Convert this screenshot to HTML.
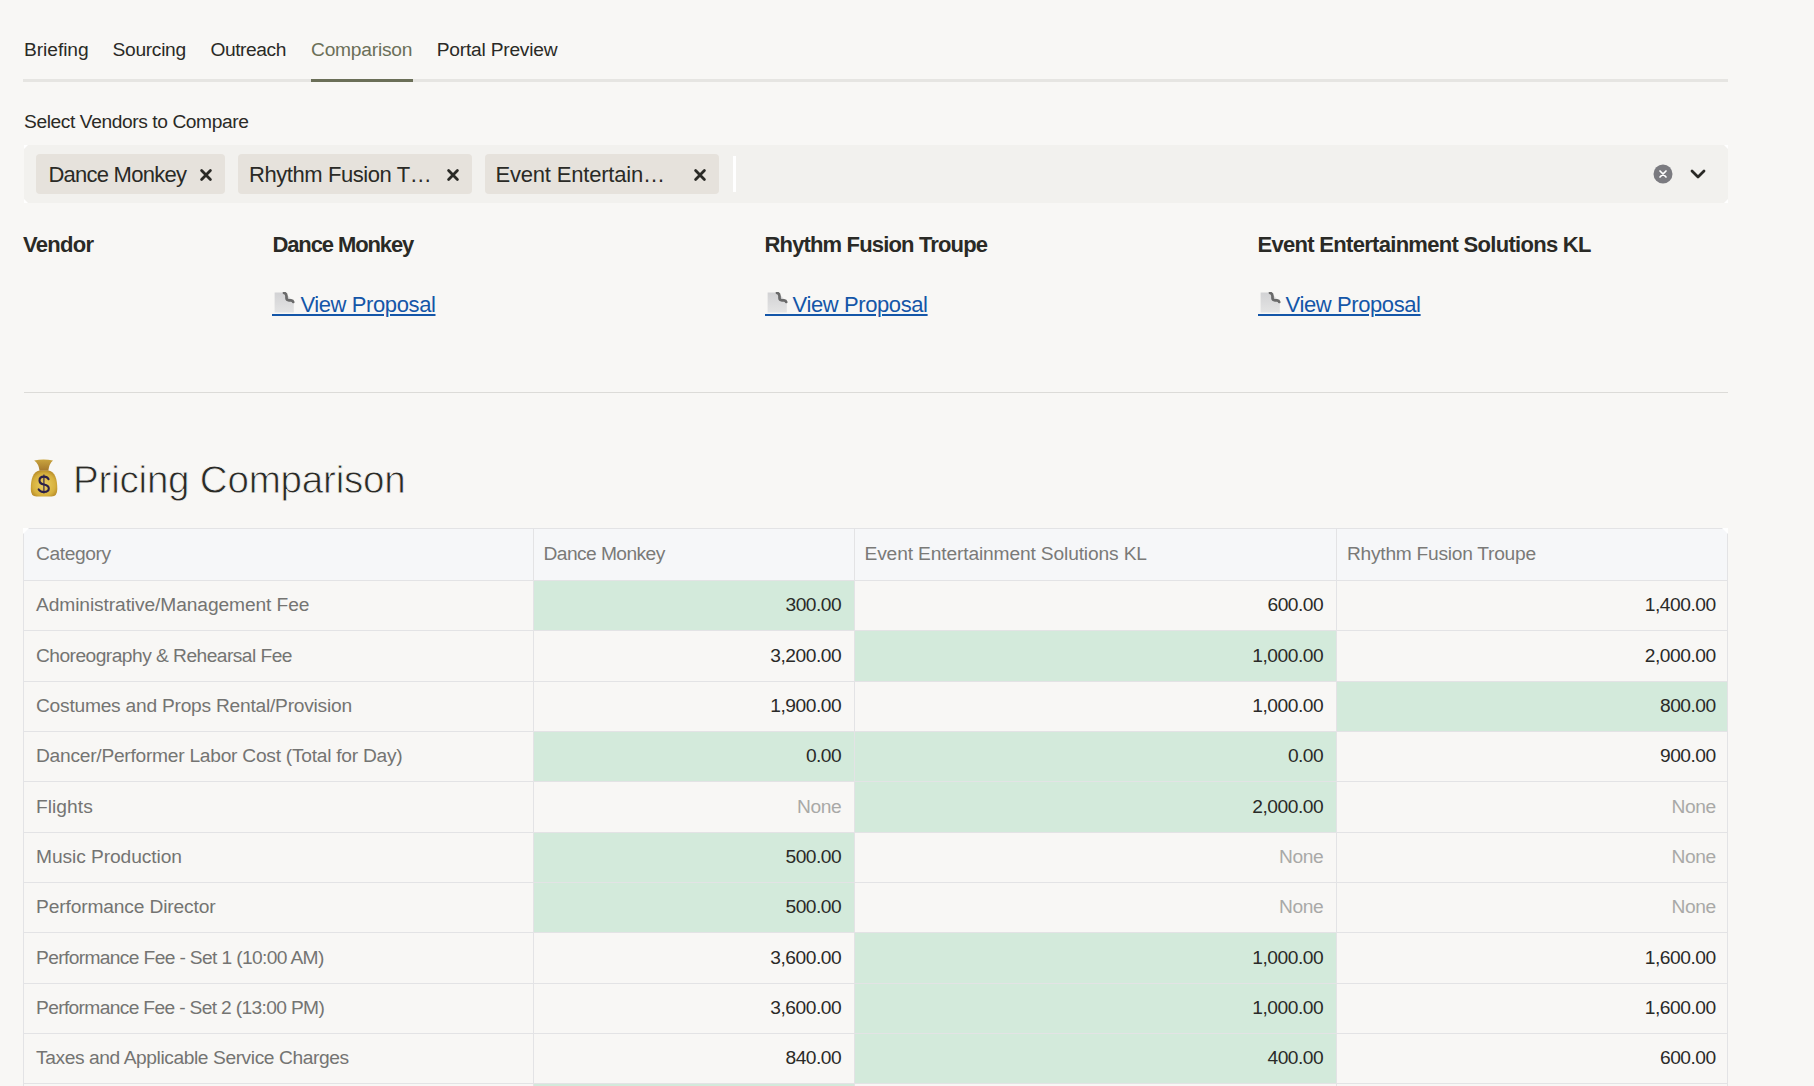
<!DOCTYPE html>
<html><head><meta charset="utf-8"><style>
html,body{margin:0;padding:0;background:#f8f7f5;width:1814px;height:1086px;overflow:hidden;}
body{position:relative;font-family:"Liberation Sans",sans-serif;}
.t{position:absolute;white-space:nowrap;line-height:1;}
.r{position:absolute;}
</style></head><body>
<div class="t" style="left:24.00px;top:40.15px;font-size:19.2px;color:#2a2a26;letter-spacing:-0.057px;">Briefing</div>
<div class="t" style="left:112.50px;top:40.15px;font-size:19.2px;color:#2a2a26;letter-spacing:-0.297px;">Sourcing</div>
<div class="t" style="left:210.40px;top:40.15px;font-size:19.2px;color:#2a2a26;letter-spacing:-0.411px;">Outreach</div>
<div class="t" style="left:311.00px;top:40.15px;font-size:19.2px;color:#6b6f58;letter-spacing:-0.223px;">Comparison</div>
<div class="t" style="left:436.70px;top:40.15px;font-size:19.2px;color:#2a2a26;letter-spacing:-0.214px;">Portal Preview</div>
<div class="r" style="left:23px;top:79px;width:1705px;height:3px;background:#e6e5e2"></div>
<div class="r" style="left:311px;top:79px;width:102px;height:3px;background:#6b6f58"></div>
<div class="t" style="left:24.00px;top:112.15px;font-size:19.2px;color:#2a2a26;letter-spacing:-0.408px;">Select Vendors to Compare</div>
<div class="r" style="left:24px;top:145px;width:1704px;height:58px;background:#f2f1ee"></div>
<svg class="r" style="left:24px;top:145px" width="4" height="4"><polygon points="0,0 4,0 0,4" fill="#ffffff"/></svg>
<svg class="r" style="left:1724px;top:145px" width="4" height="4"><polygon points="4,0 0,0 4,4" fill="#ffffff"/></svg>
<svg class="r" style="left:24px;top:199px" width="4" height="4"><polygon points="0,4 4,4 0,0" fill="#ffffff"/></svg>
<svg class="r" style="left:1724px;top:199px" width="4" height="4"><polygon points="4,4 0,4 4,0" fill="#ffffff"/></svg>
<div class="r" style="left:35.8px;top:154px;width:189.2px;height:40px;background:#e6e2dc;border-radius:4px"></div>
<div class="t" style="left:48.40px;top:163.68px;font-size:22px;color:#2a2a26;letter-spacing:-0.749px;">Dance Monkey</div>
<svg class="r" style="left:199.4px;top:167.75px" width="14" height="14" viewBox="0 0 14 14"><path d="M2.6 2.6L11.4 11.4M11.4 2.6L2.6 11.4" stroke="#2a2a26" stroke-width="2.8" stroke-linecap="round"/></svg>
<div class="r" style="left:237.5px;top:154px;width:234.3px;height:40px;background:#e6e2dc;border-radius:4px"></div>
<div class="t" style="left:249.00px;top:163.68px;font-size:22px;color:#2a2a26;letter-spacing:-0.427px;">Rhythm Fusion T…</div>
<svg class="r" style="left:446.2px;top:167.75px" width="14" height="14" viewBox="0 0 14 14"><path d="M2.6 2.6L11.4 11.4M11.4 2.6L2.6 11.4" stroke="#2a2a26" stroke-width="2.8" stroke-linecap="round"/></svg>
<div class="r" style="left:484.5px;top:154px;width:234.0px;height:40px;background:#e6e2dc;border-radius:4px"></div>
<div class="t" style="left:495.50px;top:163.68px;font-size:22px;color:#2a2a26;letter-spacing:-0.194px;">Event Entertain…</div>
<svg class="r" style="left:692.9px;top:167.75px" width="14" height="14" viewBox="0 0 14 14"><path d="M2.6 2.6L11.4 11.4M11.4 2.6L2.6 11.4" stroke="#2a2a26" stroke-width="2.8" stroke-linecap="round"/></svg>
<div class="r" style="left:733px;top:156px;width:3px;height:36px;background:#ffffff"></div>
<svg class="r" style="left:1653px;top:164px" width="20" height="20" viewBox="0 0 20 20"><circle cx="10" cy="10" r="9.5" fill="#7b7b80"/><path d="M7 7L13 13M13 7L7 13" stroke="#fff" stroke-width="1.7" stroke-linecap="round"/></svg>
<svg class="r" style="left:1690px;top:168px" width="16" height="12" viewBox="0 0 16 12"><path d="M2 3L8 9L14 3" stroke="#2a2a26" stroke-width="2.8" fill="none" stroke-linecap="round" stroke-linejoin="round"/></svg>
<div class="t" style="left:23.00px;top:233.98px;font-size:22px;color:#2a2a26;font-weight:bold;letter-spacing:-0.714px;">Vendor</div>
<div class="t" style="left:272.40px;top:233.98px;font-size:22px;color:#2a2a26;font-weight:bold;letter-spacing:-1.105px;">Dance Monkey</div>
<svg class="r" style="left:274.4px;top:291.5px" width="22" height="22" viewBox="0 0 22 22"><defs><linearGradient id="pg" x1="0" y1="0" x2="0" y2="1"><stop offset="0" stop-color="#d2d2d4"/><stop offset="1" stop-color="#e4e4e4"/></linearGradient></defs><path d="M0.6 0.5H10.5L19.8 9.8V20.5H0.6Z" fill="url(#pg)"/><path d="M10 0.9Q12.4 1.3 12.5 4.2V6.2Q12.7 8.2 15 8.3H17Q18.9 8.5 19.2 10" stroke="#6a6a6a" stroke-width="2.7" fill="none" stroke-linecap="round"/></svg>
<div class="t" style="left:300.40px;top:294.18px;font-size:22px;color:#1456a8;letter-spacing:-0.394px;text-decoration:underline;text-decoration-thickness:1.6px;text-underline-offset:2.2px;">View Proposal</div>
<div class="r" style="left:272.4px;top:314.2px;width:29px;height:1.6px;background:#1456a8"></div>
<div class="t" style="left:764.50px;top:233.98px;font-size:22px;color:#2a2a26;font-weight:bold;letter-spacing:-0.845px;">Rhythm Fusion Troupe</div>
<svg class="r" style="left:766.5px;top:291.5px" width="22" height="22" viewBox="0 0 22 22"><defs><linearGradient id="pg" x1="0" y1="0" x2="0" y2="1"><stop offset="0" stop-color="#d2d2d4"/><stop offset="1" stop-color="#e4e4e4"/></linearGradient></defs><path d="M0.6 0.5H10.5L19.8 9.8V20.5H0.6Z" fill="url(#pg)"/><path d="M10 0.9Q12.4 1.3 12.5 4.2V6.2Q12.7 8.2 15 8.3H17Q18.9 8.5 19.2 10" stroke="#6a6a6a" stroke-width="2.7" fill="none" stroke-linecap="round"/></svg>
<div class="t" style="left:792.50px;top:294.18px;font-size:22px;color:#1456a8;letter-spacing:-0.394px;text-decoration:underline;text-decoration-thickness:1.6px;text-underline-offset:2.2px;">View Proposal</div>
<div class="r" style="left:764.5px;top:314.2px;width:29px;height:1.6px;background:#1456a8"></div>
<div class="t" style="left:1257.50px;top:233.98px;font-size:22px;color:#2a2a26;font-weight:bold;letter-spacing:-0.700px;">Event Entertainment Solutions KL</div>
<svg class="r" style="left:1259.5px;top:291.5px" width="22" height="22" viewBox="0 0 22 22"><defs><linearGradient id="pg" x1="0" y1="0" x2="0" y2="1"><stop offset="0" stop-color="#d2d2d4"/><stop offset="1" stop-color="#e4e4e4"/></linearGradient></defs><path d="M0.6 0.5H10.5L19.8 9.8V20.5H0.6Z" fill="url(#pg)"/><path d="M10 0.9Q12.4 1.3 12.5 4.2V6.2Q12.7 8.2 15 8.3H17Q18.9 8.5 19.2 10" stroke="#6a6a6a" stroke-width="2.7" fill="none" stroke-linecap="round"/></svg>
<div class="t" style="left:1285.50px;top:294.18px;font-size:22px;color:#1456a8;letter-spacing:-0.394px;text-decoration:underline;text-decoration-thickness:1.6px;text-underline-offset:2.2px;">View Proposal</div>
<div class="r" style="left:1257.5px;top:314.2px;width:29px;height:1.6px;background:#1456a8"></div>
<div class="r" style="left:24px;top:392px;width:1704px;height:1px;background:#dcdbd8"></div>
<svg class="r" style="left:26px;top:455px" width="38" height="45" viewBox="0 0 38 45"><defs><radialGradient id="bg" cx="0.5" cy="0.55" r="0.6"><stop offset="0" stop-color="#ecd062"/><stop offset="0.7" stop-color="#d7b13e"/><stop offset="1" stop-color="#b48726"/></radialGradient><linearGradient id="nk" x1="0" y1="0" x2="0" y2="1"><stop offset="0" stop-color="#c9a43e"/><stop offset="1" stop-color="#a5782c"/></linearGradient></defs><path d="M8.2 5.6Q17.6 3.6 27 5.6Q23.2 8.6 22.3 15.8H13.6Q12.6 8.6 8.2 5.6Z" fill="url(#nk)"/><path d="M13.4 15.6C7 17 4.8 24 4.8 34Q4.8 41.6 10.5 41.6H25.5Q31.3 41.6 31.3 34C31.3 24 29 17 22.6 15.6Z" fill="url(#bg)"/><path d="M17.9 19.6V38.6" stroke="#3a2a50" stroke-width="1.2"/><path d="M22.6 24.2Q21.2 21.6 18 21.6Q13.4 21.6 13.5 25.6Q13.6 28.6 18 29.6Q22.8 30.6 22.8 33.6Q22.8 37 18 37Q14.2 37 12.7 34.4" stroke="#2b2048" stroke-width="2.1" fill="none" stroke-linecap="round"/></svg>
<div class="t" style="left:73.00px;top:460.93px;font-size:38.6px;color:#2a2a26;letter-spacing:-0.224px;-webkit-text-stroke:0.8px #f8f7f5;">Pricing Comparison</div>
<div class="r" style="left:23px;top:528px;width:1705px;height:560px;border:1px solid #e3e3e5;box-sizing:border-box;background:#f8f7f5"></div>
<div class="r" style="left:24px;top:529px;width:1703px;height:51px;background:#f6f7f9"></div>
<div class="t" style="left:36.00px;top:544.25px;font-size:19.2px;color:#7a7a78;letter-spacing:-0.401px;">Category</div>
<div class="t" style="left:543.50px;top:544.25px;font-size:19.2px;color:#7a7a78;letter-spacing:-0.560px;">Dance Monkey</div>
<div class="t" style="left:864.50px;top:544.25px;font-size:19.2px;color:#7a7a78;letter-spacing:-0.142px;">Event Entertainment Solutions KL</div>
<div class="t" style="left:1347.00px;top:544.25px;font-size:19.2px;color:#7a7a78;letter-spacing:-0.264px;">Rhythm Fusion Troupe</div>
<div class="r" style="left:533px;top:580.00px;width:321px;height:50.33px;background:#d3eadb"></div>
<div class="r" style="left:854px;top:630.33px;width:482px;height:50.33px;background:#d3eadb"></div>
<div class="r" style="left:1336px;top:680.67px;width:391px;height:50.33px;background:#d3eadb"></div>
<div class="r" style="left:533px;top:731.00px;width:321px;height:50.33px;background:#d3eadb"></div>
<div class="r" style="left:854px;top:731.00px;width:482px;height:50.33px;background:#d3eadb"></div>
<div class="r" style="left:854px;top:781.33px;width:482px;height:50.33px;background:#d3eadb"></div>
<div class="r" style="left:533px;top:831.66px;width:321px;height:50.33px;background:#d3eadb"></div>
<div class="r" style="left:533px;top:882.00px;width:321px;height:50.33px;background:#d3eadb"></div>
<div class="r" style="left:854px;top:932.33px;width:482px;height:50.33px;background:#d3eadb"></div>
<div class="r" style="left:854px;top:982.66px;width:482px;height:50.33px;background:#d3eadb"></div>
<div class="r" style="left:854px;top:1033.00px;width:482px;height:50.33px;background:#d3eadb"></div>
<div class="r" style="left:533px;top:1083.33px;width:321px;height:50.33px;background:#d3eadb"></div>
<div class="r" style="left:23px;top:580.00px;width:1705px;height:1px;background:#e3e3e5"></div>
<div class="r" style="left:23px;top:630.33px;width:1705px;height:1px;background:#e3e3e5"></div>
<div class="r" style="left:23px;top:680.67px;width:1705px;height:1px;background:#e3e3e5"></div>
<div class="r" style="left:23px;top:731.00px;width:1705px;height:1px;background:#e3e3e5"></div>
<div class="r" style="left:23px;top:781.33px;width:1705px;height:1px;background:#e3e3e5"></div>
<div class="r" style="left:23px;top:831.66px;width:1705px;height:1px;background:#e3e3e5"></div>
<div class="r" style="left:23px;top:882.00px;width:1705px;height:1px;background:#e3e3e5"></div>
<div class="r" style="left:23px;top:932.33px;width:1705px;height:1px;background:#e3e3e5"></div>
<div class="r" style="left:23px;top:982.66px;width:1705px;height:1px;background:#e3e3e5"></div>
<div class="r" style="left:23px;top:1033.00px;width:1705px;height:1px;background:#e3e3e5"></div>
<div class="r" style="left:23px;top:1083.33px;width:1705px;height:1px;background:#e3e3e5"></div>
<div class="r" style="left:533px;top:528px;width:1px;height:560px;background:#e3e3e5"></div>
<div class="r" style="left:854px;top:528px;width:1px;height:560px;background:#e3e3e5"></div>
<div class="r" style="left:1336px;top:528px;width:1px;height:560px;background:#e3e3e5"></div>
<svg class="r" style="left:23px;top:528px" width="6" height="6"><polygon points="0,0 6,0 0,6" fill="#ffffff"/></svg>
<svg class="r" style="left:1722px;top:528px" width="6" height="6"><polygon points="6,0 0,0 6,6" fill="#ffffff"/></svg>
<div class="t" style="left:36.00px;top:595.41px;font-size:19.2px;color:#747472;letter-spacing:-0.100px;">Administrative/Management Fee</div>
<div class="t" style="left:785.57px;top:595.41px;font-size:19.2px;color:#2a2a28;letter-spacing:-0.520px;">300.00</div>
<div class="t" style="left:1267.57px;top:595.41px;font-size:19.2px;color:#2a2a28;letter-spacing:-0.520px;">600.00</div>
<div class="t" style="left:1644.77px;top:595.41px;font-size:19.2px;color:#2a2a28;letter-spacing:-0.472px;">1,400.00</div>
<div class="t" style="left:36.00px;top:645.75px;font-size:19.2px;color:#747472;letter-spacing:-0.533px;">Choreography &amp; Rehearsal Fee</div>
<div class="t" style="left:770.27px;top:645.75px;font-size:19.2px;color:#2a2a28;letter-spacing:-0.472px;">3,200.00</div>
<div class="t" style="left:1252.27px;top:645.75px;font-size:19.2px;color:#2a2a28;letter-spacing:-0.472px;">1,000.00</div>
<div class="t" style="left:1644.77px;top:645.75px;font-size:19.2px;color:#2a2a28;letter-spacing:-0.472px;">2,000.00</div>
<div class="t" style="left:36.00px;top:696.08px;font-size:19.2px;color:#747472;letter-spacing:-0.239px;">Costumes and Props Rental/Provision</div>
<div class="t" style="left:770.27px;top:696.08px;font-size:19.2px;color:#2a2a28;letter-spacing:-0.472px;">1,900.00</div>
<div class="t" style="left:1252.27px;top:696.08px;font-size:19.2px;color:#2a2a28;letter-spacing:-0.472px;">1,000.00</div>
<div class="t" style="left:1660.07px;top:696.08px;font-size:19.2px;color:#2a2a28;letter-spacing:-0.520px;">800.00</div>
<div class="t" style="left:36.00px;top:746.41px;font-size:19.2px;color:#747472;letter-spacing:-0.258px;">Dancer/Performer Labor Cost (Total for Day)</div>
<div class="t" style="left:805.98px;top:746.41px;font-size:19.2px;color:#2a2a28;letter-spacing:-0.551px;">0.00</div>
<div class="t" style="left:1287.98px;top:746.41px;font-size:19.2px;color:#2a2a28;letter-spacing:-0.551px;">0.00</div>
<div class="t" style="left:1660.07px;top:746.41px;font-size:19.2px;color:#2a2a28;letter-spacing:-0.520px;">900.00</div>
<div class="t" style="left:36.00px;top:796.75px;font-size:19.2px;color:#747472;letter-spacing:0.042px;">Flights</div>
<div class="t" style="left:797.05px;top:796.75px;font-size:19.2px;color:#a9a9a7;letter-spacing:-0.415px;">None</div>
<div class="t" style="left:1252.27px;top:796.75px;font-size:19.2px;color:#2a2a28;letter-spacing:-0.472px;">2,000.00</div>
<div class="t" style="left:1671.55px;top:796.75px;font-size:19.2px;color:#a9a9a7;letter-spacing:-0.415px;">None</div>
<div class="t" style="left:36.00px;top:847.08px;font-size:19.2px;color:#747472;letter-spacing:-0.084px;">Music Production</div>
<div class="t" style="left:785.57px;top:847.08px;font-size:19.2px;color:#2a2a28;letter-spacing:-0.520px;">500.00</div>
<div class="t" style="left:1279.05px;top:847.08px;font-size:19.2px;color:#a9a9a7;letter-spacing:-0.415px;">None</div>
<div class="t" style="left:1671.55px;top:847.08px;font-size:19.2px;color:#a9a9a7;letter-spacing:-0.415px;">None</div>
<div class="t" style="left:36.00px;top:897.41px;font-size:19.2px;color:#747472;letter-spacing:-0.140px;">Performance Director</div>
<div class="t" style="left:785.57px;top:897.41px;font-size:19.2px;color:#2a2a28;letter-spacing:-0.520px;">500.00</div>
<div class="t" style="left:1279.05px;top:897.41px;font-size:19.2px;color:#a9a9a7;letter-spacing:-0.415px;">None</div>
<div class="t" style="left:1671.55px;top:897.41px;font-size:19.2px;color:#a9a9a7;letter-spacing:-0.415px;">None</div>
<div class="t" style="left:36.00px;top:947.74px;font-size:19.2px;color:#747472;letter-spacing:-0.635px;">Performance Fee - Set 1 (10:00 AM)</div>
<div class="t" style="left:770.27px;top:947.74px;font-size:19.2px;color:#2a2a28;letter-spacing:-0.472px;">3,600.00</div>
<div class="t" style="left:1252.27px;top:947.74px;font-size:19.2px;color:#2a2a28;letter-spacing:-0.472px;">1,000.00</div>
<div class="t" style="left:1644.77px;top:947.74px;font-size:19.2px;color:#2a2a28;letter-spacing:-0.472px;">1,600.00</div>
<div class="t" style="left:36.00px;top:998.08px;font-size:19.2px;color:#747472;letter-spacing:-0.652px;">Performance Fee - Set 2 (13:00 PM)</div>
<div class="t" style="left:770.27px;top:998.08px;font-size:19.2px;color:#2a2a28;letter-spacing:-0.472px;">3,600.00</div>
<div class="t" style="left:1252.27px;top:998.08px;font-size:19.2px;color:#2a2a28;letter-spacing:-0.472px;">1,000.00</div>
<div class="t" style="left:1644.77px;top:998.08px;font-size:19.2px;color:#2a2a28;letter-spacing:-0.472px;">1,600.00</div>
<div class="t" style="left:36.00px;top:1048.41px;font-size:19.2px;color:#747472;letter-spacing:-0.410px;">Taxes and Applicable Service Charges</div>
<div class="t" style="left:785.57px;top:1048.41px;font-size:19.2px;color:#2a2a28;letter-spacing:-0.520px;">840.00</div>
<div class="t" style="left:1267.57px;top:1048.41px;font-size:19.2px;color:#2a2a28;letter-spacing:-0.520px;">400.00</div>
<div class="t" style="left:1660.07px;top:1048.41px;font-size:19.2px;color:#2a2a28;letter-spacing:-0.520px;">600.00</div>
</body></html>
